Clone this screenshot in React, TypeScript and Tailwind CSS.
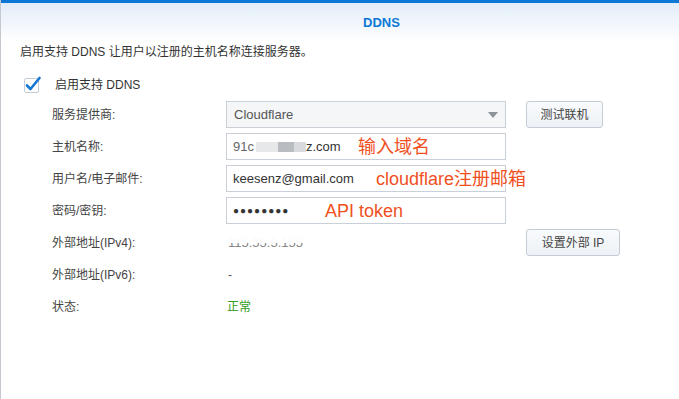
import type { ReactNode } from 'react';

const font = { fontFamily: '"Liberation Sans", "Noto Sans CJK SC", sans-serif' };

function Row({ label, children, action }: { label: string; children?: ReactNode; action?: ReactNode }) {
  return (
    <div className="grid grid-cols-[154px_280px_auto] gap-x-[20px] items-center h-[27px]">
      <div className="text-[12px] text-[#444]">{label}</div>
      <div className="relative h-full flex items-center">{children}</div>
      <div>{action}</div>
    </div>
  );
}

function Input({ children }: { children: ReactNode }) {
  return (
    <div className="w-full h-[27px] border border-[#c9d0d8] bg-white flex items-center px-[6px] text-[13px] text-[#333]">
      {children}
    </div>
  );
}

function Btn({ label, w }: { label: string; w: string }) {
  return (
    <button
      className={`${w} h-[27px] border border-[#c5ccd5] rounded-[3px] bg-gradient-to-b from-[#f8fafc] to-[#eef2f6] text-[12px] text-[#444]`}
    >
      {label}
    </button>
  );
}

function Note({ text, left }: { text: string; left: string }) {
  return (
    <span className={`absolute ${left} top-1/2 -translate-y-1/2 whitespace-nowrap text-[18px] text-[#f0501e]`}>
      {text}
    </span>
  );
}

export default function App() {
  return (
    <div style={font} className="w-[679px] h-[399px] bg-white overflow-hidden flex flex-col border-l border-[#c4c9cf]">
      {/* top bar */}
      <div className="h-[3px] bg-[#0b78d7]" />

      {/* header */}
      <div className="h-[39px] bg-gradient-to-b from-[#e2edf9] to-white flex items-center justify-center pl-[83px]">
        <span className="text-[13px] font-bold text-[#0a79d6]">DDNS</span>
      </div>

      <div className="pl-[19px] pt-[1px]">
        <p className="text-[12px] text-[#333] leading-[18px]">启用支持 DDNS 让用户以注册的主机名称连接服务器。</p>

        {/* checkbox */}
        <label className="flex items-center gap-[13px] mt-[15px] ml-[4px]">
          <svg width="18" height="18" viewBox="0 0 18 18">
            <rect x="0.5" y="2.5" width="14" height="14" rx="1.5" fill="#fff" stroke="#c6ccd3" />
            <path d="M3 9.5 L6.5 13 L15.5 2" fill="none" stroke="#1478d4" strokeWidth="2.6" strokeLinecap="round" strokeLinejoin="round" />
          </svg>
          <span className="text-[12px] text-[#333]">启用支持 DDNS</span>
        </label>

        {/* form */}
        <div className="flex flex-col gap-[5px] pl-[32px] mt-[7px]">
          <Row label="服务提供商:" action={<Btn label="测试联机" w="w-[77px]" />}>
            <div className="w-full h-[27px] border border-[#c9d0d8] bg-[#f4f6f8] flex items-center justify-between px-[7px] text-[13px] text-[#555]">
              <span>Cloudflare</span>
              <svg width="10" height="6" viewBox="0 0 10 6">
                <path d="M0 0 H10 L5 6 Z" fill="#8c939b" />
              </svg>
            </div>
          </Row>

          <Row label="主机名称:">
            <Input>
              <span className="text-[#666]">91c</span>
              <span className="w-[22px] h-[10px] bg-[#e6e8ea] ml-[2px]" />
              <span className="w-[16px] h-[10px] bg-[#b9bcc0]" />
              <span className="w-[12px] h-[10px] bg-[#d8dadd]" />
              <span>z.com</span>
            </Input>
            <Note text="输入域名" left="left-[132px]" />
          </Row>

          <Row label="用户名/电子邮件:">
            <Input>keesenz@gmail.com</Input>
            <Note text="cloudflare注册邮箱" left="left-[150px]" />
          </Row>

          <Row label="密码/密钥:">
            <Input>
              <span className="tracking-[1px] text-[10px]">●●●●●●●●</span>
            </Input>
            <Note text="API token" left="left-[99px]" />
          </Row>

          <Row label="外部地址(IPv4):" action={<Btn label="设置外部 IP" w="w-[94px]" />}>
            <span className="relative ml-[2px] text-[13px] text-[#888]">
              115.55.5.155
              {/* masked upper half */}
              <span className="absolute left-0 right-0 top-0 h-[10px] bg-white/95" />
            </span>
          </Row>

          <Row label="外部地址(IPv6):">
            <span className="ml-[2px] text-[12px] text-[#555]">-</span>
          </Row>

          <Row label="状态:">
            <span className="ml-[1px] text-[12px] text-[#2f9e22]">正常</span>
          </Row>
        </div>
      </div>
    </div>
  );
}
